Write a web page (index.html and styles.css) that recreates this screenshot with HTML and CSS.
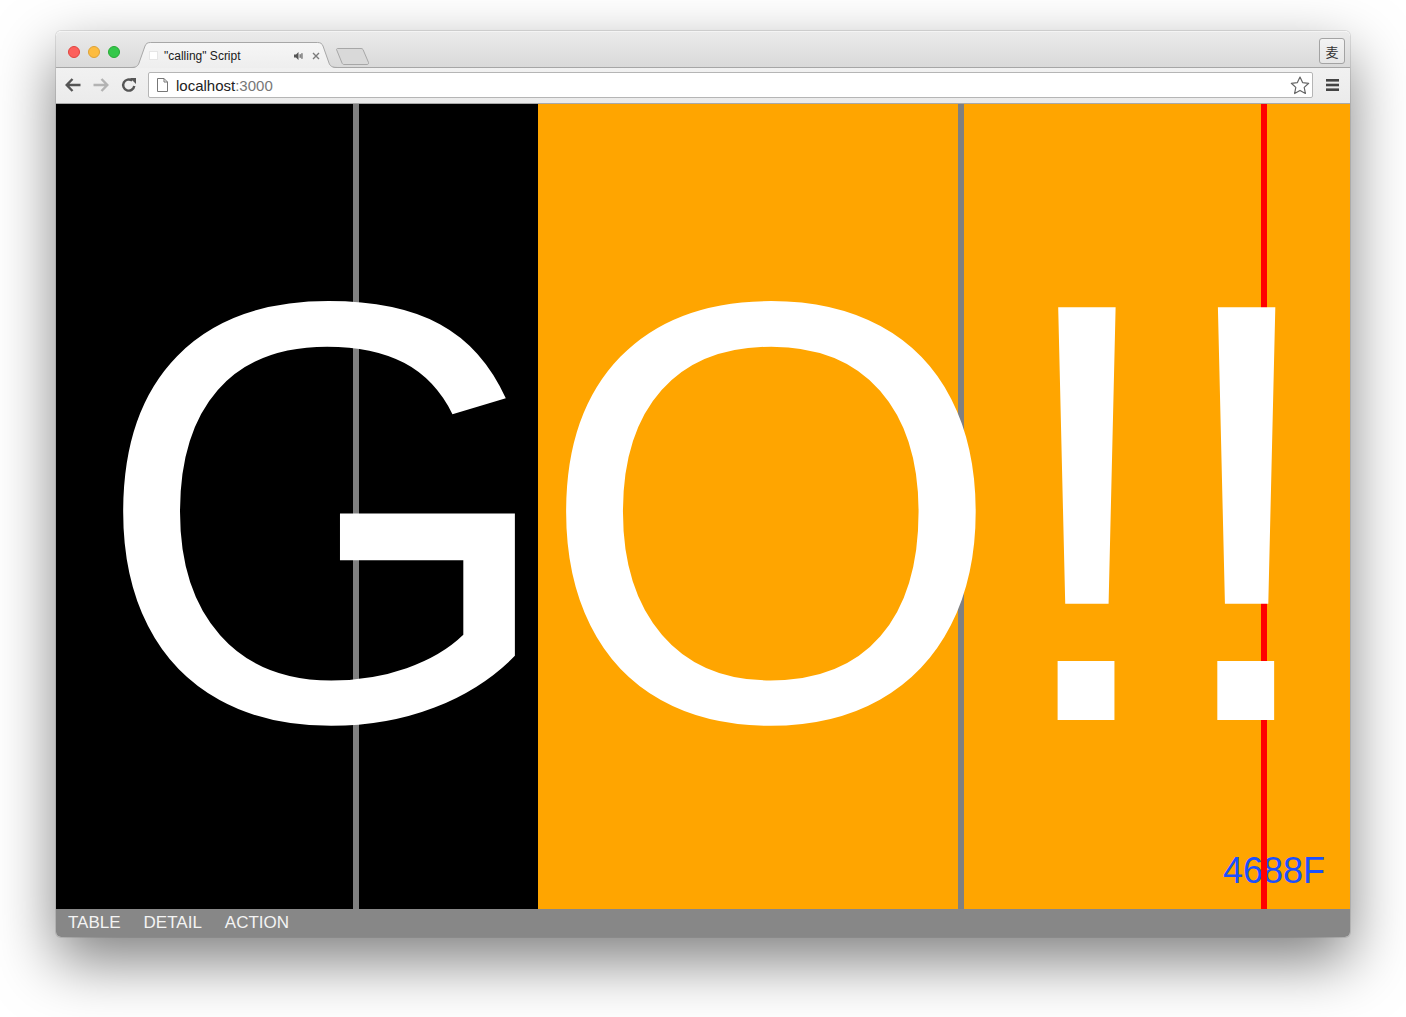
FILE: index.html
```html
<!DOCTYPE html>
<html>
<head>
<meta charset="utf-8">
<title>"calling" Script</title>
<link rel="stylesheet" href="styles.css">
</head>
<body>
<div class="window">
  <div class="titlebar">
    <div class="lights">
      <span class="light red"></span>
      <span class="light yellow"></span>
      <span class="light green"></span>
    </div>
    <div class="tab">
      <svg class="tab-shape" width="207" height="26" viewBox="0 0 207 26">
        <defs>
          <linearGradient id="tabg" x1="0" y1="0" x2="0" y2="1">
            <stop offset="0" stop-color="#f6f6f6"/>
            <stop offset="1" stop-color="#eeeeee"/>
          </linearGradient>
        </defs>
        <path d="M0 26 C5 26 7 24 8 21 L14 4 C15 1.5 16.5 0.5 19.5 0.5 L186.5 0.5 C189.5 0.5 191 1.5 192 4 L198 21 C199 24 201 26 207 26 Z" fill="url(#tabg)"/>
        <path d="M0 25.5 C5 25.5 7 24 8 21 L14 4 C15 1.5 16.5 0.5 19.5 0.5 L186.5 0.5 C189.5 0.5 191 1.5 192 4 L198 21 C199 24 201 25.5 207 25.5" fill="none" stroke="#a7a7a7" stroke-width="1"/>
      </svg>
      <span class="favicon"></span>
      <span class="tab-title">"calling" Script</span>
      <svg class="speaker" width="9" height="8" viewBox="0 0 9 8">
        <path d="M0 2.5 H2 L4.5 0 V8 L2 5.5 H0 Z" fill="#555"/>
        <rect x="5.6" y="2.2" width="1.1" height="3.6" fill="#555"/>
        <rect x="7.4" y="1.2" width="1.1" height="5.6" fill="#555"/>
      </svg>
      <svg class="tab-close" width="8" height="8" viewBox="0 0 8 8">
        <path d="M1 1 L7 7 M7 1 L1 7" stroke="#7a7a7a" stroke-width="1.4"/>
      </svg>
    </div>
    <svg class="newtab" width="34" height="17" viewBox="0 0 34 17">
      <path d="M0.5 1.5 C0.5 0.8 1 0.5 2 0.5 L25 0.5 C26 0.5 26.6 0.8 27 1.5 L32.5 14.5 C32.8 15.5 32.3 16.5 31 16.5 L8 16.5 C7 16.5 6.5 16 6 15 Z" fill="#d9d9d9" stroke="#a7a7a7"/>
    </svg>
    <div class="spacer"></div>
    <div class="ime">麦</div>
  </div>
  <div class="toolbar">
    <div class="nav">
      <svg class="nav-icon" width="16" height="14" viewBox="0 0 16 14">
        <path d="M7.5 1 L1.7 7 L7.5 13 M1.7 7 H15.5" fill="none" stroke="#555" stroke-width="2.4"/>
      </svg>
      <svg class="nav-icon" width="16" height="14" viewBox="0 0 16 14">
        <path d="M8.5 1 L14.3 7 L8.5 13 M14.3 7 H0.5" fill="none" stroke="#b3b3b3" stroke-width="2.4"/>
      </svg>
      <svg class="nav-icon" width="16" height="16" viewBox="0 0 16 16">
        <path d="M13.3 9 A5.6 5.6 0 1 1 11.2 3.6" fill="none" stroke="#555" stroke-width="2.4"/>
        <path d="M9 1 H15 V7 Z" fill="#555"/>
      </svg>
    </div>
    <div class="omnibox">
      <svg class="page-icon" width="11" height="14" viewBox="0 0 11 14">
        <path d="M0.5 0.5 H7 L10.5 4 V13.5 H0.5 Z M7 0.5 V4 H10.5" fill="#fff" stroke="#777" stroke-width="1"/>
      </svg>
      <span class="url"><span class="host">localhost</span><span class="port">:3000</span></span>
      <svg class="star" width="20" height="19" viewBox="0 0 20 19">
        <path d="M10 1 L12.6 6.6 L18.7 7.3 L14.2 11.4 L15.4 17.5 L10 14.4 L4.6 17.5 L5.8 11.4 L1.3 7.3 L7.4 6.6 Z" fill="none" stroke="#666" stroke-width="1.2" stroke-linejoin="round"/>
      </svg>
    </div>
    <svg class="menu" width="13" height="12" viewBox="0 0 13 12">
      <rect x="0" y="0" width="13" height="2.6" fill="#444"/>
      <rect x="0" y="4.7" width="13" height="2.6" fill="#444"/>
      <rect x="0" y="9.4" width="13" height="2.6" fill="#444"/>
    </svg>
  </div>
  <div class="content">
    <div class="panels">
      <div class="panel panel-black"></div>
      <div class="panel panel-orange"></div>
    </div>
    <div class="code-layer"><span class="code">4688F</span></div>
    <div class="lines">
      <span class="line line-gray" style="left: 297px"></span>
      <span class="line line-gray" style="left: 902px"></span>
      <span class="line line-red" style="left: 1205px"></span>
    </div>
    <div class="go"><span class="ch ch-g">G</span><span class="ch ch-o">O</span><span class="ch ch-b1">!</span><span class="ch ch-b2">!</span></div>
  </div>
  <div class="bottombar">
    <span class="tabitem">TABLE</span>
    <span class="tabitem">DETAIL</span>
    <span class="tabitem">ACTION</span>
  </div>
</div>
</body>
</html>
```

FILE: styles.css
```css
* {
  box-sizing: border-box;
}

html, body {
  margin: 0;
  padding: 0;
  background: #ffffff;
}

body {
  font-family: "Liberation Sans", Arial, sans-serif;
  padding: 31px 56px 80px 56px;
  min-height: 1017px;
}

.window {
  width: 1294px;
  height: 906px;
  border-radius: 5px;
  overflow: hidden;
  display: flex;
  flex-direction: column;
  box-shadow: 0 24px 60px rgba(0, 0, 0, 0.5), 0 0 0 1px rgba(0, 0, 0, 0.1);
}

/* ---------- title bar ---------- */
.titlebar {
  height: 37px;
  flex: none;
  display: flex;
  align-items: flex-start;
  background: linear-gradient(#ebebeb, #d9d9d9);
  border-bottom: 1px solid #a6a6a6;
  border-top: 1px solid #f4f4f4;
  border-radius: 5px 5px 0 0;
}

.lights {
  display: flex;
  gap: 8px;
  padding-left: 12px;
  margin-top: 14px;
}

.light {
  width: 12px;
  height: 12px;
  border-radius: 50%;
}

.light.red {
  background: #fc605c;
  border: 1px solid #e0443e;
}

.light.yellow {
  background: #fdbc40;
  border: 1px solid #dea236;
}

.light.green {
  background: #34c84a;
  border: 1px solid #27aa35;
}

.tab {
  position: relative;
  z-index: 1;
  width: 207px;
  height: 26px;
  margin-left: 11px;
  margin-top: 10px;
  display: flex;
  align-items: center;
  padding-left: 18px;
  padding-top: 1px;
}

.tab-shape {
  position: absolute;
  left: 0;
  top: 0;
}

.favicon {
  position: relative;
  width: 9px;
  height: 9px;
  background: #ffffff;
  border: 1px solid #e6e6e6;
}

.tab-title {
  position: relative;
  margin-left: 6px;
  font-size: 12px;
  color: #1a1a1a;
  width: 125px;
  white-space: nowrap;
}

.speaker {
  position: relative;
  margin-left: 5px;
}

.tab-close {
  position: relative;
  margin-left: 9px;
}

.newtab {
  margin-top: 16px;
  margin-left: -2px;
}

.spacer {
  flex: 1;
}

.ime {
  width: 26px;
  height: 26px;
  margin-top: 6px;
  margin-right: 5px;
  border: 1px solid #a3a3a3;
  border-radius: 3px;
  background: linear-gradient(#f3f3f3, #e6e6e6);
  display: flex;
  align-items: center;
  justify-content: center;
  font-family: "Noto Sans CJK SC", "Noto Sans CJK JP", sans-serif;
  font-size: 13px;
  color: #333;
}

/* ---------- toolbar ---------- */
.toolbar {
  height: 36px;
  flex: none;
  display: flex;
  align-items: center;
  background: linear-gradient(#f1f1f1, #ebebeb);
  border-bottom: 1px solid #a9a9a9;
  padding-bottom: 1px;
}

.nav {
  display: flex;
  align-items: center;
  padding-left: 9px;
  gap: 12px;
}

.nav-icon {
  display: block;
}

.omnibox {
  margin-left: 11px;
  width: 1165px;
  height: 26px;
  background: #ffffff;
  border: 1px solid #b5b5b5;
  border-radius: 2px;
  display: flex;
  align-items: center;
  padding-left: 8px;
  padding-right: 2px;
}

.page-icon {
  display: block;
}

.url {
  margin-left: 8px;
  font-size: 15px;
  flex: 1;
}

.host {
  color: #222;
}

.port {
  color: #777;
}

.star {
  display: block;
}

.menu {
  margin-left: 13px;
}

/* ---------- content ---------- */
.content {
  height: 805px;
  flex: none;
  display: grid;
  grid-template: 1fr / 1fr;
  overflow: hidden;
}

.content > * {
  grid-area: 1 / 1;
}

.panels {
  display: flex;
}

.panel-black {
  width: 482px;
  background: #000000;
}

.panel-orange {
  flex: 1;
  background: #ffa500;
}

.code-layer {
  display: flex;
  justify-content: flex-end;
  align-items: flex-end;
  padding: 0 25px 20px 0;
}

.code {
  font-size: 36px;
  line-height: 1;
  color: #1a50ff;
}

.lines {
  position: relative;
}

.line {
  position: absolute;
  top: 0;
  bottom: 0;
  width: 6px;
}

.line-gray {
  background: #808080;
}

.line-red {
  background: #ff0000;
}

.go {
  position: relative;
  font-size: 600px;
  line-height: 1;
  color: #ffffff;
  padding-top: 108px;
  padding-left: 37px;
  white-space: nowrap;
}

.ch-g {
  letter-spacing: -22px;
}

.ch-o {
  letter-spacing: -1px;
}

.ch-b1 {
  letter-spacing: -7px;
}

/* ---------- bottom bar ---------- */
.bottombar {
  height: 28px;
  flex: none;
  background: #878787;
  display: flex;
  align-items: center;
  gap: 23px;
  padding-left: 12px;
  font-size: 17px;
  line-height: 28px;
  color: #f4f4f4;
}
```
